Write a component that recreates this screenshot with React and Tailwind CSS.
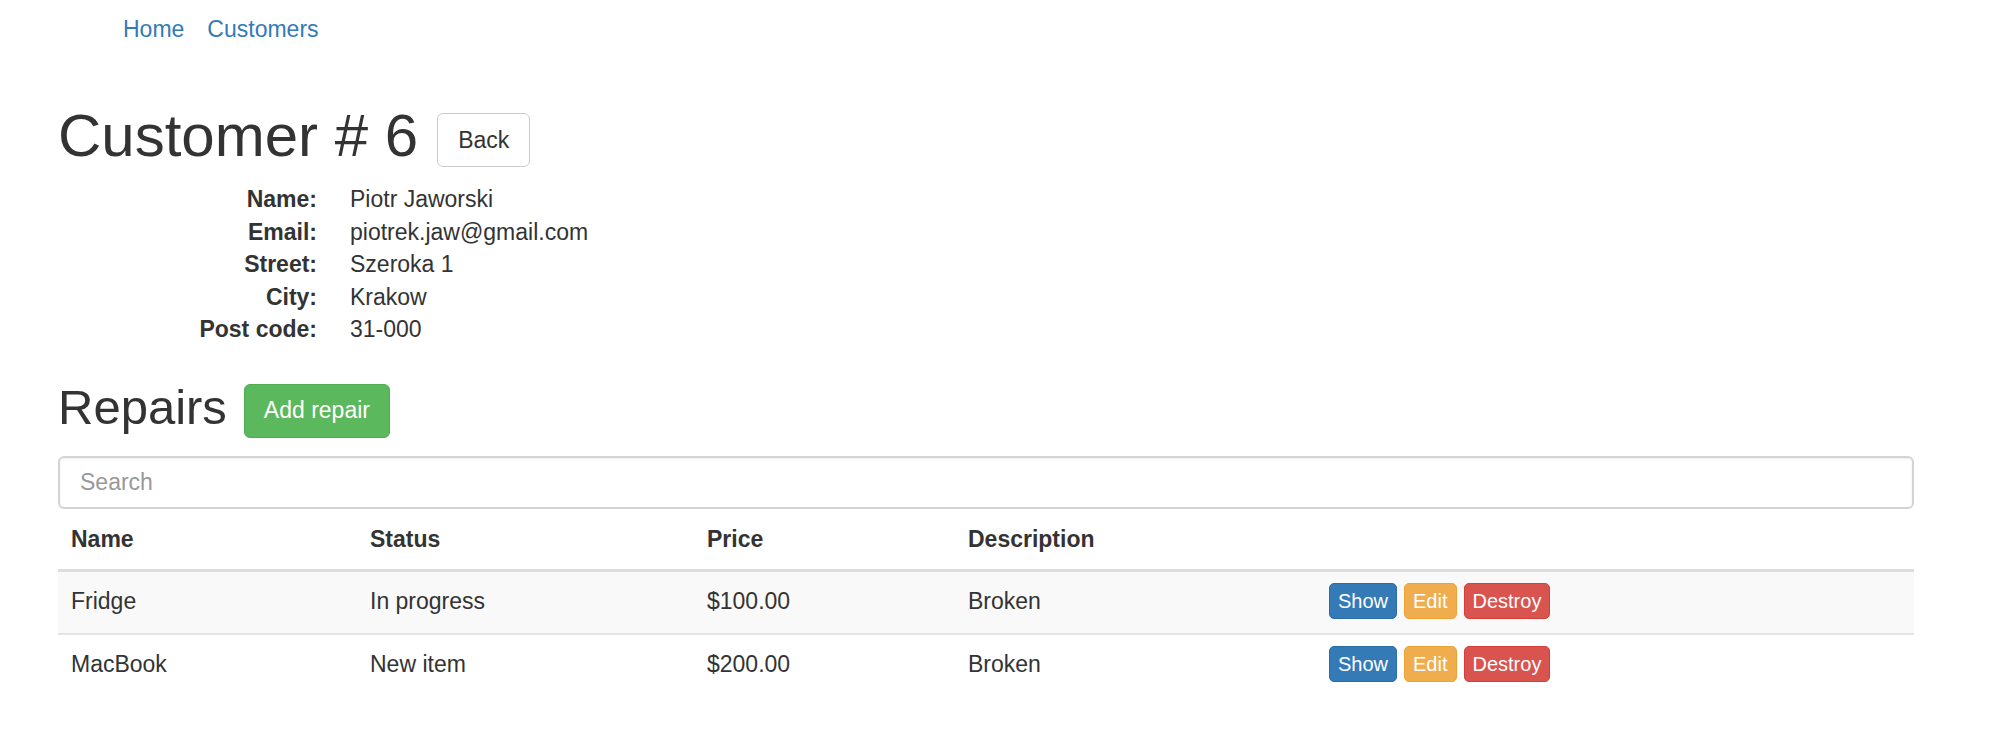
import React from 'react';

const repairs = [
  { name: 'Fridge', status: 'In progress', price: '$100.00', description: 'Broken' },
  { name: 'MacBook', status: 'New item', price: '$200.00', description: 'Broken' },
];

const details = [
  ['Name:', 'Piotr Jaworski'],
  ['Email:', 'piotrek.jaw@gmail.com'],
  ['Street:', 'Szeroka 1'],
  ['City:', 'Krakow'],
  ['Post code:', '31-000'],
];

const App = () => {
  return (
    <div className="min-h-screen bg-white text-[#333] font-['Liberation_Sans',Arial,sans-serif] text-[23px] leading-[33px]">
      {/* Top links */}
      <nav className="flex gap-[23px] pl-[123px] pt-[13px]">
        <a href="#" className="text-[#337ab7]">Home</a>
        <a href="#" className="text-[#337ab7]">Customers</a>
      </nav>

      <div className="pl-[58px] pr-[86px]">
        <h1 className="mt-[57px] text-[60px] leading-[66px] font-normal">
          Customer # 6
          <button className="ml-[19px] inline-block align-middle h-[54px] px-[20px] text-[23px] leading-[33px] border border-[#ccc] rounded-[6px] bg-white text-[#333]">
            Back
          </button>
        </h1>

        {/* Customer details */}
        <dl className="mt-[14px] grid grid-cols-[259px_1fr] gap-x-[33px] leading-[32.5px]">
          {details.map(([label, value]) => (
            <React.Fragment key={label}>
              <dt className="text-right font-bold">{label}</dt>
              <dd>{value}</dd>
            </React.Fragment>
          ))}
        </dl>

        <h2 className="mt-[34px] text-[49px] leading-[54px] font-normal">
          Repairs
          <button className="ml-[17px] inline-block align-middle h-[54px] px-[19px] text-[23px] leading-[33px] border border-[#4cae4c] rounded-[6px] bg-[#5cb85c] text-white">
            Add repair
          </button>
        </h2>

        <input
          type="text"
          placeholder="Search"
          className="mt-[18px] block w-full h-[53px] px-[20px] border-2 border-[#d4d4d4] rounded-[6px] text-[23px] placeholder:text-[#999] shadow-[inset_0_1px_2px_rgba(0,0,0,0.08)] outline-none"
        />

        <table className="w-full mt-[1px] border-collapse table-fixed">
          <colgroup>
            <col className="w-[299px]" />
            <col className="w-[337px]" />
            <col className="w-[261px]" />
            <col className="w-[361px]" />
            <col />
          </colgroup>
          <thead>
            <tr>
              <th className="text-left font-bold px-[13px] py-[13px] border-b-[3px] border-[#ddd]">Name</th>
              <th className="text-left font-bold px-[13px] py-[13px] border-b-[3px] border-[#ddd]">Status</th>
              <th className="text-left font-bold px-[13px] py-[13px] border-b-[3px] border-[#ddd]">Price</th>
              <th className="text-left font-bold px-[13px] py-[13px] border-b-[3px] border-[#ddd]">Description</th>
              <th className="px-[13px] py-[13px] border-b-[3px] border-[#ddd]"></th>
            </tr>
          </thead>
          <tbody>
            {repairs.map((r, i) => (
              <tr key={r.name} className={i % 2 === 0 ? 'bg-[#f9f9f9]' : ''}>
                <td className="px-[13px] pt-[13px] pb-[15px] border-t-2 border-[#e3e3e3]">{r.name}</td>
                <td className="px-[13px] pt-[13px] pb-[15px] border-t-2 border-[#e3e3e3]">{r.status}</td>
                <td className="px-[13px] pt-[13px] pb-[15px] border-t-2 border-[#e3e3e3]">{r.price}</td>
                <td className="px-[13px] pt-[13px] pb-[15px] border-t-2 border-[#e3e3e3]">{r.description}</td>
                <td className="px-[13px] pt-[13px] pb-[15px] border-t-2 border-[#e3e3e3]">
                  <div className="flex items-center gap-[7px] h-[33px]">
                    <button className="h-[36px] px-[8px] text-[20px] leading-[30px] text-white bg-[#337ab7] border border-[#2e6da4] rounded-[5px]">Show</button>
                    <button className="h-[36px] px-[8px] text-[20px] leading-[30px] text-white bg-[#f0ad4e] border border-[#eea236] rounded-[5px]">Edit</button>
                    <button className="h-[36px] px-[8px] text-[20px] leading-[30px] text-white bg-[#d9534f] border border-[#d43f3a] rounded-[5px]">Destroy</button>
                  </div>
                </td>
              </tr>
            ))}
          </tbody>
        </table>
      </div>
    </div>
  );
};

export default App;
